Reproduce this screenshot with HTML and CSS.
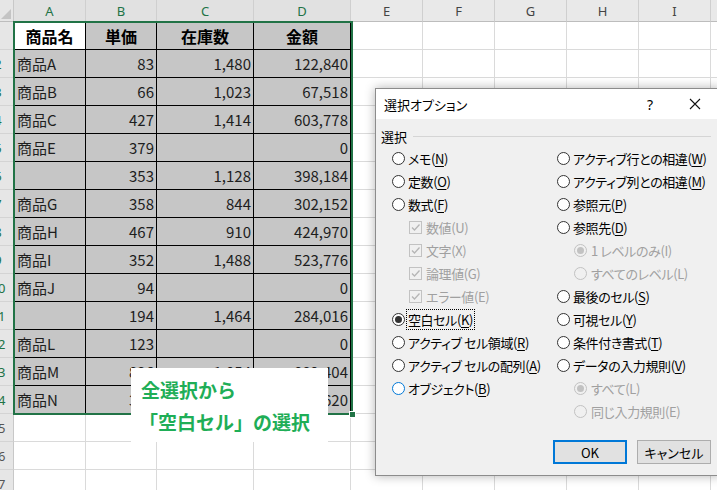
FILE: index.html
```html
<!DOCTYPE html>
<html lang="ja">
<head>
<meta charset="utf-8">
<title>選択オプション</title>
<link rel="stylesheet" href="styles.css">
</head>
<body>
<div class="sheet">
  <div class="corner"><svg width="10" height="10" viewBox="0 0 10 10"><polygon points="10,0 10,10 0,10" fill="#c4c4c4"/></svg></div>
  <div class="ch sel">A</div><div class="ch sel">B</div><div class="ch sel">C</div><div class="ch sel">D</div>
  <div class="ch">E</div><div class="ch">F</div><div class="ch">G</div><div class="ch">H</div><div class="ch">I</div><div class="ch"></div>

  <div class="rh sel"><span>1</span></div>
  <div class="t h w">商品名</div><div class="t h">単価</div><div class="t h">在庫数</div><div class="t h">金額</div>
  <div class="c"></div><div class="c"></div><div class="c"></div><div class="c"></div><div class="c"></div><div class="c"></div>

  <div class="rh sel"><span>2</span></div>
  <div class="t">商品A</div><div class="t n">83</div><div class="t n">1,480</div><div class="t n">122,840</div>
  <div class="c"></div><div class="c"></div><div class="c"></div><div class="c"></div><div class="c"></div><div class="c"></div>

  <div class="rh sel"><span>3</span></div>
  <div class="t">商品B</div><div class="t n">66</div><div class="t n">1,023</div><div class="t n">67,518</div>
  <div class="c"></div><div class="c"></div><div class="c"></div><div class="c"></div><div class="c"></div><div class="c"></div>

  <div class="rh sel"><span>4</span></div>
  <div class="t">商品C</div><div class="t n">427</div><div class="t n">1,414</div><div class="t n">603,778</div>
  <div class="c"></div><div class="c"></div><div class="c"></div><div class="c"></div><div class="c"></div><div class="c"></div>

  <div class="rh sel"><span>5</span></div>
  <div class="t">商品E</div><div class="t n">379</div><div class="t n"></div><div class="t n">0</div>
  <div class="c"></div><div class="c"></div><div class="c"></div><div class="c"></div><div class="c"></div><div class="c"></div>

  <div class="rh sel"><span>6</span></div>
  <div class="t"></div><div class="t n">353</div><div class="t n">1,128</div><div class="t n">398,184</div>
  <div class="c"></div><div class="c"></div><div class="c"></div><div class="c"></div><div class="c"></div><div class="c"></div>

  <div class="rh sel"><span>7</span></div>
  <div class="t">商品G</div><div class="t n">358</div><div class="t n">844</div><div class="t n">302,152</div>
  <div class="c"></div><div class="c"></div><div class="c"></div><div class="c"></div><div class="c"></div><div class="c"></div>

  <div class="rh sel"><span>8</span></div>
  <div class="t">商品H</div><div class="t n">467</div><div class="t n">910</div><div class="t n">424,970</div>
  <div class="c"></div><div class="c"></div><div class="c"></div><div class="c"></div><div class="c"></div><div class="c"></div>

  <div class="rh sel"><span>9</span></div>
  <div class="t">商品I</div><div class="t n">352</div><div class="t n">1,488</div><div class="t n">523,776</div>
  <div class="c"></div><div class="c"></div><div class="c"></div><div class="c"></div><div class="c"></div><div class="c"></div>

  <div class="rh sel"><span>10</span></div>
  <div class="t">商品J</div><div class="t n">94</div><div class="t n"></div><div class="t n">0</div>
  <div class="c"></div><div class="c"></div><div class="c"></div><div class="c"></div><div class="c"></div><div class="c"></div>

  <div class="rh sel"><span>11</span></div>
  <div class="t"></div><div class="t n">194</div><div class="t n">1,464</div><div class="t n">284,016</div>
  <div class="c"></div><div class="c"></div><div class="c"></div><div class="c"></div><div class="c"></div><div class="c"></div>

  <div class="rh sel"><span>12</span></div>
  <div class="t">商品L</div><div class="t n">123</div><div class="t n"></div><div class="t n">0</div>
  <div class="c"></div><div class="c"></div><div class="c"></div><div class="c"></div><div class="c"></div><div class="c"></div>

  <div class="rh sel"><span>13</span></div>
  <div class="t">商品M</div><div class="t n">836</div><div class="t n">1,054</div><div class="t n">882,404</div>
  <div class="c"></div><div class="c"></div><div class="c"></div><div class="c"></div><div class="c"></div><div class="c"></div>

  <div class="rh sel"><span>14</span></div>
  <div class="t">商品N</div><div class="t n">380</div><div class="t n">1,249</div><div class="t n">474,620</div>
  <div class="c"></div><div class="c"></div><div class="c"></div><div class="c"></div><div class="c"></div><div class="c"></div>

  <div class="rh"><span>15</span></div>
  <div class="c"></div><div class="c"></div><div class="c"></div><div class="c"></div>
  <div class="c"></div><div class="c"></div><div class="c"></div><div class="c"></div><div class="c"></div><div class="c"></div>

  <div class="rh"><span>16</span></div>
  <div class="c"></div><div class="c"></div><div class="c"></div><div class="c"></div>
  <div class="c"></div><div class="c"></div><div class="c"></div><div class="c"></div><div class="c"></div><div class="c"></div>

  <div class="rh"><span>17</span></div>
  <div class="c"></div><div class="c"></div><div class="c"></div><div class="c"></div>
  <div class="c"></div><div class="c"></div><div class="c"></div><div class="c"></div><div class="c"></div><div class="c"></div>
</div>

<div class="selection"><i class="handle"></i></div>

<div class="callout">
  <p>全選択から</p>
  <p>「空白セル」の選択</p>
</div>

<div class="dlg">
  <div class="dlg-title">
    <span class="ttl">選択オプション</span>
    <span class="help">?</span>
    <span class="close"><svg width="12" height="12" viewBox="0 0 12 12"><path d="M1 1 L11 11 M11 1 L1 11" stroke="#111" stroke-width="1.1" fill="none"/></svg></span>
  </div>
  <div class="dlg-body">
    <div class="grp"><span>選択</span><i class="rule"></i></div>
    <div class="opts">
      <div class="col">
        <div class="opt"><i class="rb"></i><span>メモ(<u>N</u>)</span></div>
        <div class="opt"><i class="rb"></i><span>定数(<u>O</u>)</span></div>
        <div class="opt"><i class="rb"></i><span>数式(<u>F</u>)</span></div>
        <div class="opt sub dis"><i class="cb"><svg width="11" height="11" viewBox="0 0 11 11"><path d="M2 5.5 L4.5 8 L9.5 2.5" stroke="#b5b5b5" stroke-width="1.3" fill="none"/></svg></i><span>数値(U)</span></div>
        <div class="opt sub dis"><i class="cb"><svg width="11" height="11" viewBox="0 0 11 11"><path d="M2 5.5 L4.5 8 L9.5 2.5" stroke="#b5b5b5" stroke-width="1.3" fill="none"/></svg></i><span>文字(X)</span></div>
        <div class="opt sub dis"><i class="cb"><svg width="11" height="11" viewBox="0 0 11 11"><path d="M2 5.5 L4.5 8 L9.5 2.5" stroke="#b5b5b5" stroke-width="1.3" fill="none"/></svg></i><span>論理値(G)</span></div>
        <div class="opt sub dis"><i class="cb"><svg width="11" height="11" viewBox="0 0 11 11"><path d="M2 5.5 L4.5 8 L9.5 2.5" stroke="#b5b5b5" stroke-width="1.3" fill="none"/></svg></i><span>エラー値(E)</span></div>
        <div class="opt"><i class="rb on"></i><span class="focus">空白セル(<u>K</u>)</span></div>
        <div class="opt"><i class="rb"></i><span>アクティブ セル領域(<u>R</u>)</span></div>
        <div class="opt"><i class="rb"></i><span>アクティブ セルの配列(<u>A</u>)</span></div>
        <div class="opt"><i class="rb hot"></i><span>オブジェクト(<u>B</u>)</span></div>
      </div>
      <div class="col">
        <div class="opt"><i class="rb"></i><span>アクティブ行との相違(<u>W</u>)</span></div>
        <div class="opt"><i class="rb"></i><span>アクティブ列との相違(<u>M</u>)</span></div>
        <div class="opt"><i class="rb"></i><span>参照元(<u>P</u>)</span></div>
        <div class="opt"><i class="rb"></i><span>参照先(<u>D</u>)</span></div>
        <div class="opt sub dis"><i class="rb off on"></i><span>1 レベルのみ(I)</span></div>
        <div class="opt sub dis"><i class="rb off"></i><span>すべてのレベル(L)</span></div>
        <div class="opt"><i class="rb"></i><span>最後のセル(<u>S</u>)</span></div>
        <div class="opt"><i class="rb"></i><span>可視セル(<u>Y</u>)</span></div>
        <div class="opt"><i class="rb"></i><span>条件付き書式(<u>T</u>)</span></div>
        <div class="opt"><i class="rb"></i><span>データの入力規則(<u>V</u>)</span></div>
        <div class="opt sub dis"><i class="rb off on"></i><span>すべて(L)</span></div>
        <div class="opt sub dis"><i class="rb off"></i><span>同じ入力規則(E)</span></div>
      </div>
    </div>
    <div class="btns">
      <button class="btn ok">OK</button>
      <button class="btn">キャンセル</button>
    </div>
  </div>
</div>
</body>
</html>
```

FILE: styles.css
```css
* { box-sizing: border-box; }

body {
  margin: 0;
  width: 717px;
  height: 490px;
  overflow: hidden;
  position: relative;
  background: #fff;
  font-family: "Noto Sans CJK JP", "Noto Sans", sans-serif;
  color: #1a1a1a;
}

/* ---------- spreadsheet ---------- */
.sheet {
  display: grid;
  grid-template-columns: 14px 72px 71px 97px 97px 72px 72px 72px 72px 72px 80px;
  grid-template-rows: 22px;
  grid-auto-rows: 28px;
}

.corner {
  background: #e6e6e6;
  border-right: 1px solid #c8c8c8;
  border-bottom: 1px solid #bdbdbd;
  display: flex;
  align-items: flex-end;
  justify-content: flex-end;
  padding: 0 2px 2px 0;
}

.ch {
  background: #e9e9e9;
  border-right: 1px solid #cfcfcf;
  border-bottom: 1px solid #bdbdbd;
  font-family: "Noto Sans", sans-serif;
  font-size: 13px;
  color: #444;
  display: flex;
  align-items: center;
  justify-content: center;
}
.ch.sel { color: #217346; background: #e1e1e1; }

.rh {
  background: #e6e6e6;
  border-right: 1px solid #c8c8c8;
  border-bottom: 1px solid #d4d4d4;
  overflow: hidden;
  display: flex;
  align-items: center;
  font-family: "Noto Sans", sans-serif;
  font-size: 13px;
  color: #555;
}
.rh span {
  flex: none;
  width: 36px;
  margin-left: -20px;
  text-align: center;
}
.rh.sel { color: #217346; }

.c {
  border-right: 1px solid #dadada;
  border-bottom: 1px solid #dadada;
}

.t {
  background: #c6c6c6;
  border-right: 1px solid #000;
  border-bottom: 1px solid #000;
  font-size: 15px;
  color: #1e1e1e;
  padding: 0 3px;
  display: flex;
  align-items: center;
  white-space: nowrap;
  overflow: hidden;
}
.t.n { justify-content: flex-end; padding-right: 2px; }
.t.h { justify-content: center; font-weight: 700; font-size: 16px; color: #000; }
.t.w { background: #fff; }

.selection {
  position: absolute;
  left: 13px;
  top: 21px;
  width: 340px;
  height: 394px;
  border: 2px solid #217346;
  z-index: 2;
}
.handle {
  position: absolute;
  right: -5px;
  bottom: -5px;
  width: 7px;
  height: 7px;
  background: #217346;
  border: 1px solid #fff;
}

.callout {
  position: absolute;
  left: 131px;
  top: 368px;
  width: 197px;
  height: 74px;
  background: #fff;
  z-index: 3;
  padding: 6px 0 0 10px;
  color: #1fae57;
  font-weight: 700;
  font-size: 19px;
  line-height: 32px;
}
.callout p { margin: 0; white-space: nowrap; }
.callout p + p { margin-left: -2px; }

/* ---------- dialog ---------- */
.dlg {
  position: absolute;
  left: 375px;
  top: 88px;
  width: 346px;
  height: 388px;
  background: #f0f0f0;
  border: 1px solid #8c8c8c;
  box-shadow: 0 0 10px rgba(0, 0, 0, 0.3);
  z-index: 4;
  font-size: 13px;
  color: #000;
  font-feature-settings: "palt";
}

.dlg-title {
  height: 30px;
  background: #fff;
  display: flex;
  align-items: center;
  padding-left: 8px;
}
.ttl { flex: 1; }
.help {
  width: 30px;
  margin-right: 8px;
  text-align: center;
  font-family: "Noto Sans", sans-serif;
  font-size: 14px;
}
.close {
  width: 44px;
  margin-right: 3px;
  height: 30px;
  display: flex;
  align-items: center;
  justify-content: center;
}

.dlg-body { padding: 0 9px 0 5px; }

.grp {
  margin-top: 9px;
  height: 16px;
  display: flex;
  align-items: center;
}
.rule {
  flex: 1;
  height: 1px;
  background: #d5d5d5;
  margin-left: 6px;
}

.opts {
  margin: 3px 0 0 11px;
  display: grid;
  grid-template-columns: 165px 1fr;
}
.col { display: flex; flex-direction: column; }
.opt {
  height: 23px;
  display: flex;
  align-items: center;
  gap: 3px;
  white-space: nowrap;
  letter-spacing: -0.4px;
}
.opt u { text-decoration: underline; text-underline-offset: 2px; }
.opt.sub { padding-left: 17px; gap: 4px; }
.opt.dis { color: #a0a0a0; }

.rb {
  flex: none;
  width: 13px;
  height: 13px;
  border: 1px solid #333;
  border-radius: 50%;
  background: #fff;
  display: flex;
  align-items: center;
  justify-content: center;
}
.rb.on::after {
  content: "";
  width: 7px;
  height: 7px;
  border-radius: 50%;
  background: #333;
}
.rb.hot { border-color: #0078d7; }
.rb.off { border-color: #c2c2c2; background: #f0f0f0; }
.rb.off.on::after { background: #c2c2c2; }

.cb {
  flex: none;
  width: 13px;
  height: 13px;
  border: 1px solid #c2c2c2;
  background: #f0f0f0;
  display: flex;
  align-items: center;
  justify-content: center;
}

.focus {
  outline: 1px dotted #000;
  outline-offset: 0;
  padding: 0 1px;
  margin-left: -1px;
}

.btns {
  margin-top: 17px;
  display: flex;
  justify-content: flex-end;
  gap: 10px;
}
.btn {
  width: 74px;
  height: 24px;
  border: 1px solid #adadad;
  background: #e1e1e1;
  font-family: "Noto Sans CJK JP", "Noto Sans", sans-serif;
  font-feature-settings: "palt";
  font-size: 13px;
  color: #000;
  padding: 0;
}
.btn.ok { border: 2px solid #0078d7; }
```
